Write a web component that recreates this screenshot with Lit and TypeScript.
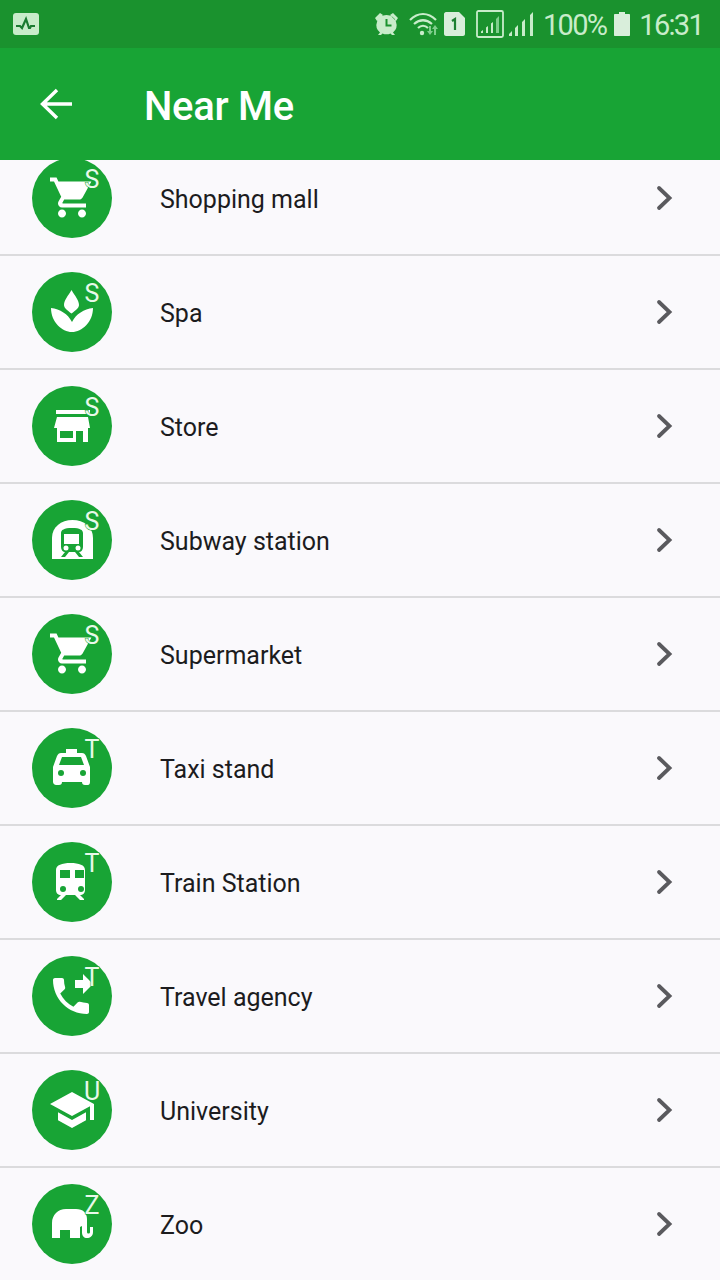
import { LitElement, html, css, svg } from "lit";
import { customElement } from "lit/decorators.js";

const W = "#ffffff";
const G = "#18a435";

const CART = svg`<path transform="translate(16 15.5) scale(2)" fill="${W}" d="M7 18c-1.1 0-1.99.9-1.99 2S5.9 22 7 22s2-.9 2-2-.9-2-2-2zM1 2v2h2l3.6 7.59-1.35 2.45c-.16.28-.25.61-.25.96 0 1.1.9 2 2 2h12v-2H7.42c-.14 0-.25-.11-.25-.25l.03-.12.9-1.63h7.45c.75 0 1.41-.41 1.75-1.03L21.7 4H5.21l-.94-2H1zm16 16c-1.1 0-1.99.9-1.99 2s.89 2 1.99 2 2-.9 2-2-.9-2-2-2z"/>`;

const ICONS: Record<string, unknown> = {
  cart: CART,
  spa: svg`<path fill="${W}" d="M39.500 18C43 24 47 28 47 33c0 3-3.500 5.500-7.500 8.500-4-3-7.500-5.500-7.500-8.500C32 28 36 24 39.500 18z"/><path fill="${W}" d="M19 36c9 1 17 6 21 14 4-8 12-13 21-14 0 14-11 24-21 24S19 50 19 36z"/>`,
  store: svg`<path fill="${W}" fill-rule="evenodd" d="M24 24h34v4H24zM25 31h31l2 11h-2v14H25V42h-3zM28 45v7h13v-7zM44 45v11h7V45z"/>`,
  subway: svg`<path fill="${W}" d="M20 59V38c0-11 9-18 20.500-18S61 27 61 38v21z"/><path fill="${G}" d="M29 33c0-3 3-5 11-5s11 2 11 5v14c0 3-2 5-4 5l4 5h-4l-4-5h-6l-4 5h-4l4-5c-2 0-4-2-4-5z"/><path fill="${W}" d="M32 34h15v10H32z"/><circle cx="34" cy="48" r="2.500" fill="${W}"/><circle cx="46" cy="48" r="2.500" fill="${W}"/>`,
  taxi: svg`<path fill="${W}" d="M34 21h11v4h5c2 0 3 1 4 3l4 11v15c0 2-1 3-2 3h-3c-2 0-3-1-3-3H30c0 2-1 3-3 3h-3c-1 0-3-1-3-3V39l4-11c1-2 2-3 4-3h5z"/><path fill="${G}" d="M30 29h19l3 8H27z"/><circle cx="29" cy="45" r="3" fill="${G}"/><circle cx="51" cy="45" r="3" fill="${G}"/>`,
  train: svg`<path fill="${W}" d="M24 28c0-5 6-7 14.500-7S53 23 53 28v20c0 3-2 5-5 5l4 4v1h-4l-5-5h-9l-5 5h-4v-1l4-4c-3 0-5-2-5-5z"/><path fill="${G}" d="M28 28h10v8H28zM43 28h9v8h-9z"/><circle cx="31" cy="47" r="3" fill="${G}"/><circle cx="49" cy="47" r="3" fill="${G}"/>`,
  phone: svg`<path transform="translate(15 16) scale(2)" fill="${W}" d="M18 11l5-5-5-5v3h-4v4h4v3zm2 4.500c-1.250 0-2.450-.2-3.570-.57-.35-.11-.74-.03-1.020.24l-2.200 2.200c-2.830-1.440-5.150-3.750-6.590-6.590l2.200-2.210c.28-.26.36-.65.25-1C8.700 6.450 8.500 5.250 8.500 4c0-.55-.45-1-1-1H4c-.55 0-1 .45-1 1 0 9.390 7.610 17 17 17 .55 0 1-.45 1-1v-3.500c0-.55-.45-1-1-1z"/>`,
  school: svg`<path transform="translate(16 16) scale(2)" fill="${W}" d="M5 13.180v4L12 21l7-3.820v-4L12 17l-7-3.820zM12 3L1 9l11 6 9-4.910V17h2V9L12 3z"/>`,
  zoo: svg`<path fill="${W}" d="M20 54V39c0-8 6-14 14-14h10c7 0 11 4 11 10v13c0 2 3 2 3 0v-5h3v5c0 4-3 6-6 6s-5-2-5-6v-6l-2 1v11H38v-8H28v8z"/>`,
};

const ROWS: [string, string, string][] = [
  ["cart", "S", "Shopping mall"],
  ["spa", "S", "Spa"],
  ["store", "S", "Store"],
  ["subway", "S", "Subway station"],
  ["cart", "S", "Supermarket"],
  ["taxi", "T", "Taxi stand"],
  ["train", "T", "Train Station"],
  ["phone", "T", "Travel agency"],
  ["school", "U", "University"],
  ["zoo", "Z", "Zoo"],
];

@customElement("app-root")
export class AppRoot extends LitElement {
  static styles = css`
    :host {
      display: block;
      width: 720px;
      height: 1280px;
      overflow: hidden;
      background: #faf9fc;
      font-family: Roboto, "Liberation Sans", sans-serif;
    }
    .status {
      height: 48px;
      background: #1a922e;
      display: flex;
      align-items: center;
      padding: 0 17px 0 13px;
      color: #c8ecca;
      box-sizing: border-box;
    }
    .status svg { display: block; flex: none; }
    .spacer { flex: 1; }
    .right { display: flex; align-items: center; }
    .st {
      font-size: 29px;
      font-weight: 400;
      letter-spacing: -1.7px;
      line-height: 48px;
      white-space: nowrap;
      position: relative;
      top: 1px;
    }
    .pct { margin-left: 9px; }
    .batt { margin-left: 8px; }
    .time { margin-left: 9px; }
    .g5 { margin-left: 10px; }
    .g4 { margin-left: 5px; }
    .g11 { margin-left: 11px; }
    .bar {
      height: 112px;
      background: #18a435;
      display: flex;
      align-items: center;
      padding-left: 38px;
      color: #fff;
    }
    .bar svg { display: block; flex: none; }
    .title {
      margin-left: 70px;
      font-size: 40px;
      font-weight: 500;
      line-height: 112px;
      position: relative;
      top: 3px;
      letter-spacing: -0.3px;
    }
    .list { height: 1120px; overflow: hidden; }
    .rows { margin-top: -18px; }
    .row {
      height: 114px;
      box-sizing: border-box;
      border-bottom: 2px solid #dbdbdd;
      display: flex;
      align-items: center;
      padding: 0 46px 0 32px;
    }
    .icon {
      position: relative;
      width: 80px;
      height: 80px;
      flex: none;
      border-radius: 50%;
      background: #18a435;
    }
    .icon svg { display: block; }
    .letter {
      position: absolute;
      left: 49px;
      top: 7px;
      width: 22px;
      text-align: center;
      font-size: 25px;
      font-weight: 400;
      line-height: 30px;
      color: #e8f9ea;
      -webkit-text-stroke: 1px #18a435;
      paint-order: stroke fill;
    }
    .label {
      flex: 1;
      margin-left: 48px;
      font-size: 25px;
      line-height: 32px;
      color: #1c1c1e;
      position: relative;
      top: 2px;
    }
    .chev { display: block; flex: none; }
  `;

  render() {
    return html`
      <div class="status">
        <svg width="26" height="22" viewBox="0 0 26 22">
          <rect width="26" height="22" rx="3" fill="#c8ecca" />
          <path d="M3 13h4l2 2 4-9 3 9h1l1-2h4" fill="none" stroke="#1a7a30" stroke-width="2.200" />
        </svg>
        <div class="spacer"></div>
        <div class="right">
          <svg width="25" height="24" viewBox="0 0 25 24">
            <path fill="#c8ecca" d="M1 6l5-5 3 2-6 6zM24 6l-5-5-3 2 6 6zM12.500 3a10 10 0 0 1 6.500 17.600l2 2.400h-3l-1.500-1.500a10 10 0 0 1-8 0L7 23H4l2-2.400A10 10 0 0 1 12.500 3z" />
            <path fill="none" stroke="#1a922e" stroke-width="2" d="M12.500 7v6.500h5" />
          </svg>
          <svg class="g5" width="30" height="24" viewBox="0 0 30 24">
            <g fill="none" stroke="#c8ecca" stroke-width="2.200">
              <path d="M1 8c8-8 18-8 26 0" />
              <path d="M5 12c6-5 12-5 18 0" />
              <path d="M9 16c3-3 7-3 10 0" />
            </g>
            <circle cx="13" cy="21" r="2.200" fill="#c8ecca" />
            <path fill="#7fce8c" d="M20 14h2v5h2l-3 4-3-4h2zM27 23h-2v-6h-2l3-4 3 4h-1.900z" />
          </svg>
          <svg class="g4" width="21" height="24" viewBox="0 0 21 24">
            <path fill="#d9eedb" d="M0 2c0-1 1-2 2-2h13l6 6v16c0 1-1 2-2 2H2c-1 0-2-1-2-2z" />
            <path fill="none" stroke="#1c7f30" stroke-width="2.200" d="M8 9l3-2v11" />
          </svg>
          <svg class="g11" width="28" height="28" viewBox="0 0 28 28">
            <rect x="1" y="1" width="26" height="26" rx="1.500" fill="none" stroke="#c8ecca" stroke-width="1.800" />
            <path fill="#c8ecca" d="M5 23h2v-3l-2 1.500zM10 23h2v-7l-2 1.500zM15 23h2V12l-2 1.500z" />
            <path fill="#7fce8c" d="M20 23h3V6l-3 3z" />
          </svg>
          <svg class="g4" width="25" height="24" viewBox="0 0 25 24">
            <path fill="#c8ecca" d="M0 24v-2l3-3v5zM6 24v-8l3-3v11zM13 24V10l3-3v17zM21 24V3l3-3v24z" />
          </svg>
          <span class="st pct">100%</span>
          <svg class="batt" width="16" height="24" viewBox="0 0 16 24">
            <path fill="#d9eedb" d="M5 0h6v2h4c.6 0 1 .4 1 1v20c0 .6-.4 1-1 1H1c-.6 0-1-.4-1-1V3c0-.6.4-1 1-1h4z" />
          </svg>
          <span class="st time">16:31</span>
        </div>
      </div>
      <div class="bar">
        <svg width="36" height="36" viewBox="0 0 36 36">
          <path d="M34 18H5M19 4L4.500 18 19 32" fill="none" stroke="#fff" stroke-width="3.400" />
        </svg>
        <div class="title">Near Me</div>
      </div>
      <div class="list">
        <div class="rows">
          ${ROWS.map(
            ([icon, letter, label]) => html`
              <div class="row">
                <div class="icon">
                  <svg width="80" height="80" viewBox="0 0 80 80">${ICONS[icon]}</svg>
                  <span class="letter">${letter}</span>
                </div>
                <div class="label">${label}</div>
                <svg class="chev" width="18" height="26" viewBox="0 0 18 26">
                  <path d="M3 3l10.500 10L3 23" fill="none" stroke="#5a5a5e" stroke-width="3.800" stroke-linecap="round" />
                </svg>
              </div>
            `
          )}
        </div>
      </div>
    `;
  }
}
